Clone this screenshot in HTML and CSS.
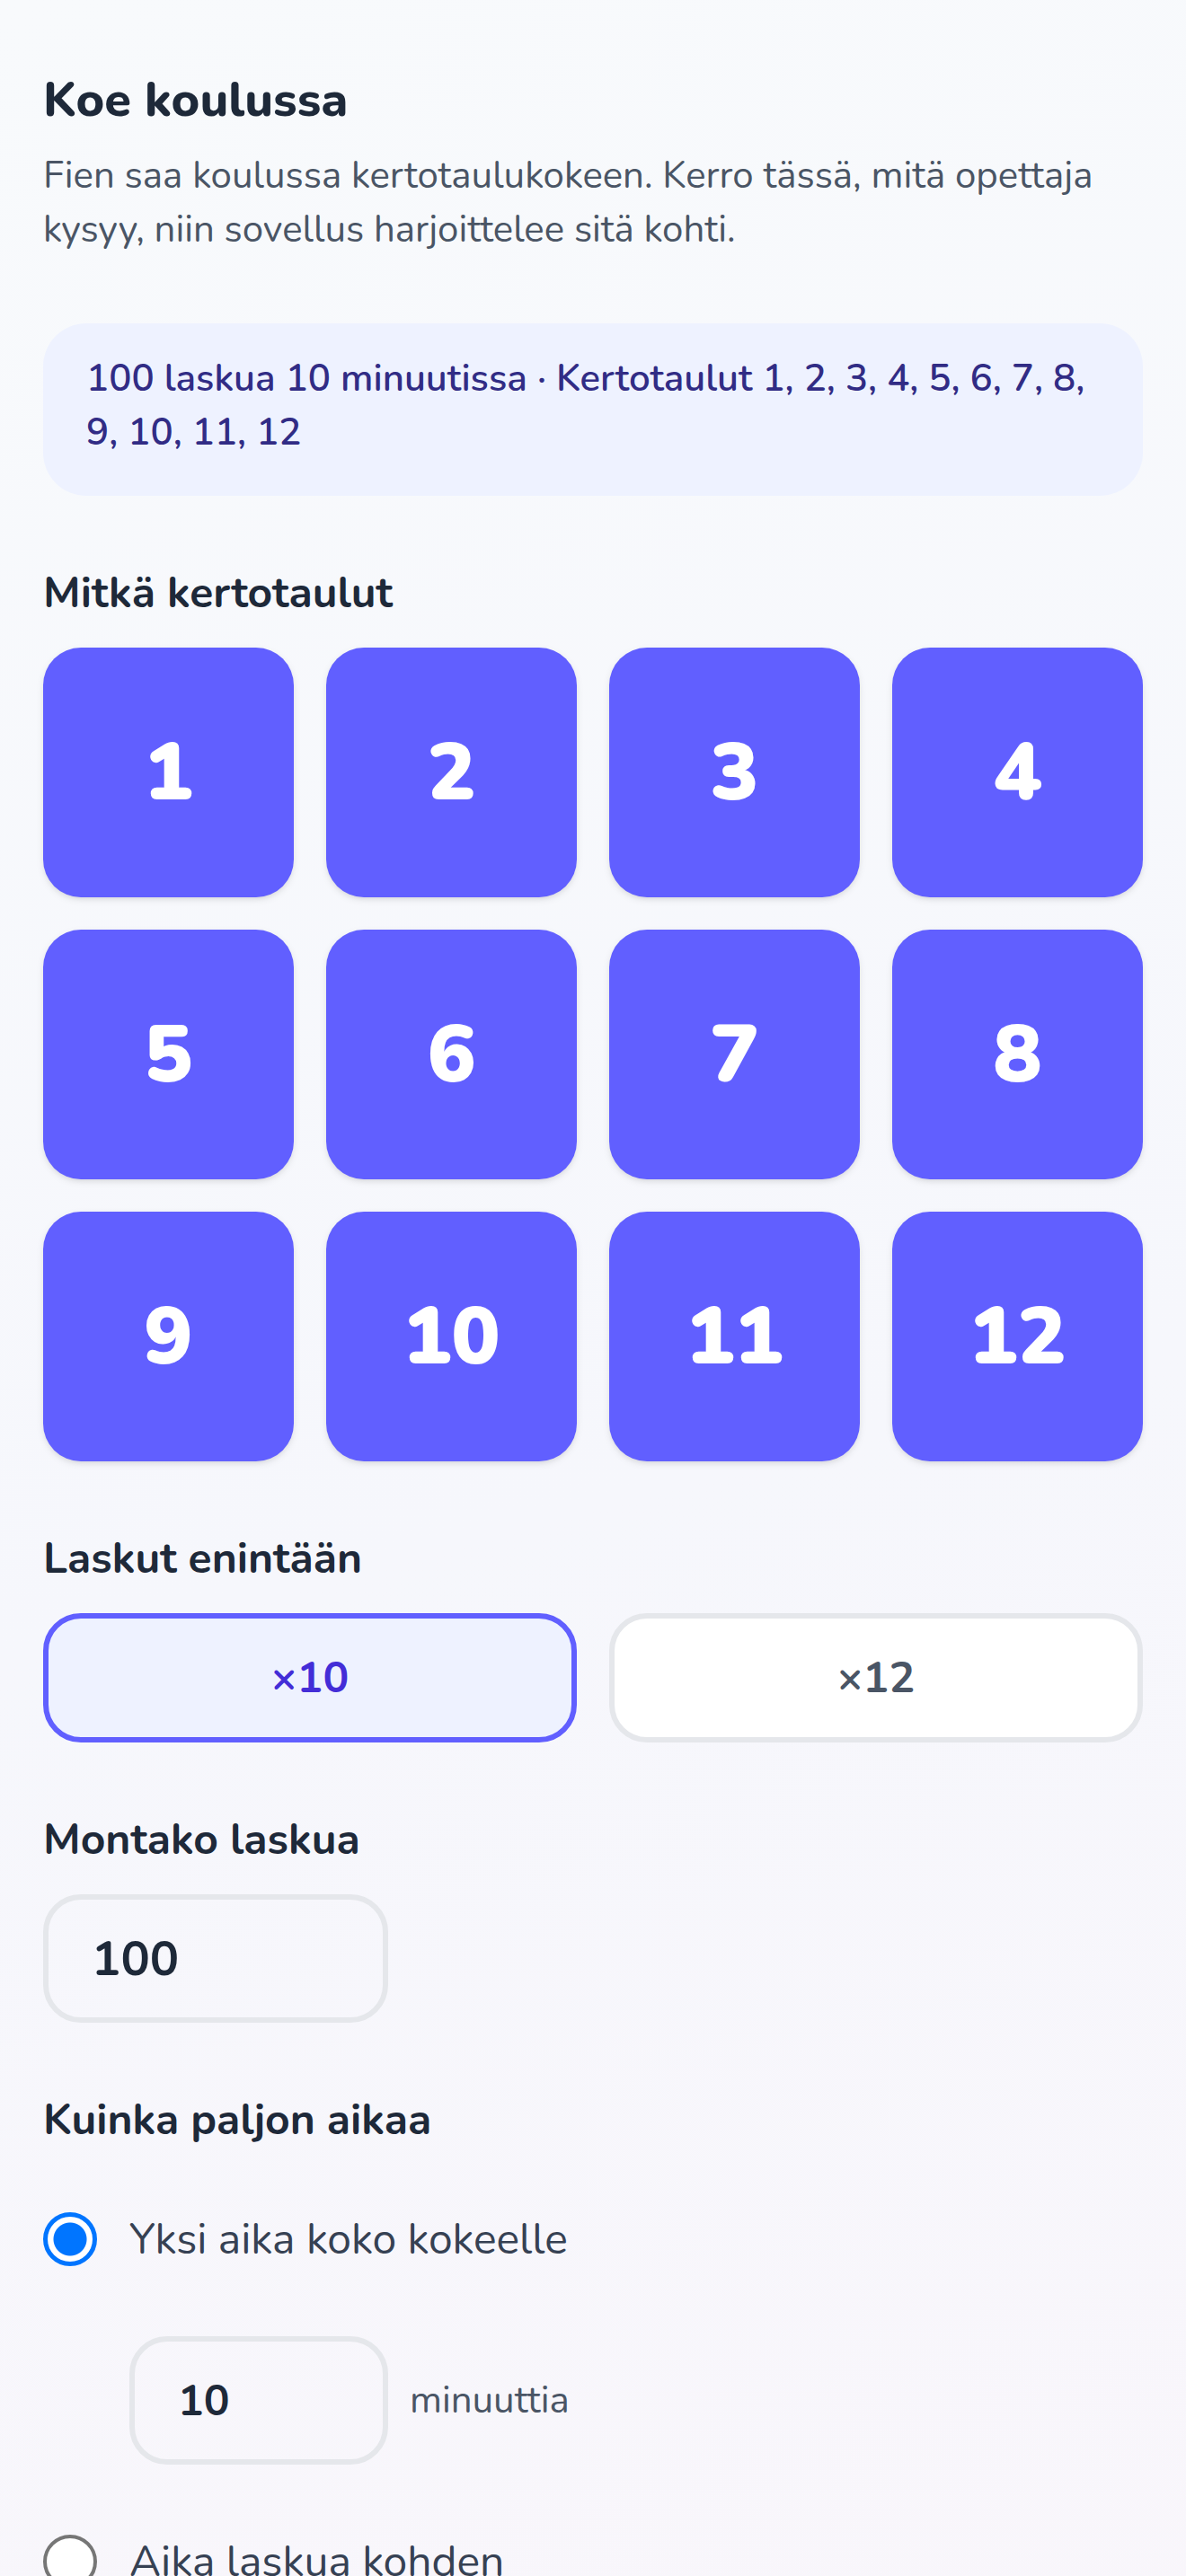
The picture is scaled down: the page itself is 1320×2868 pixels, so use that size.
FILE: index.html
```html
<!DOCTYPE html>
<html lang="fi">
<head>
<meta charset="UTF-8">
<meta name="viewport" content="width=device-width, initial-scale=1.0">
<title>Koe koulussa</title>
<link rel="stylesheet" href="styles.css">
</head>
<body>
<div class="page">
  <h1 class="title">Koe koulussa</h1>
  <p class="intro">Fien saa koulussa kertotaulukokeen. Kerro tässä, mitä opettaja kysyy, niin sovellus harjoittelee sitä kohti.</p>

  <div class="summary">100 laskua 10 minuutissa · Kertotaulut 1, 2, 3, 4, 5, 6, 7, 8, 9, 10, 11, 12</div>

  <section class="field">
    <h3 class="field-label">Mitkä kertotaulut</h3>
    <div class="tables">
      <button class="table-btn">1</button>
      <button class="table-btn">2</button>
      <button class="table-btn">3</button>
      <button class="table-btn">4</button>
      <button class="table-btn">5</button>
      <button class="table-btn">6</button>
      <button class="table-btn">7</button>
      <button class="table-btn">8</button>
      <button class="table-btn">9</button>
      <button class="table-btn">10</button>
      <button class="table-btn">11</button>
      <button class="table-btn">12</button>
    </div>
  </section>

  <section class="field">
    <h3 class="field-label">Laskut enintään</h3>
    <div class="max-choice">
      <button class="choice selected">×10</button>
      <button class="choice">×12</button>
    </div>
  </section>

  <section class="field">
    <h3 class="field-label">Montako laskua</h3>
    <input class="count-input" type="text" value="100">
  </section>

  <section class="field">
    <h3 class="field-label">Kuinka paljon aikaa</h3>
    <div class="time-options">
      <label class="option">
        <input type="radio" name="timeMode" checked>
        <span>Yksi aika koko kokeelle</span>
      </label>
      <div class="minutes-row">
        <input class="minutes-input" type="text" value="10">
        <span class="unit">minuuttia</span>
      </div>
      <label class="option">
        <input type="radio" name="timeMode">
        <span>Aika laskua kohden</span>
      </label>
    </div>
  </section>
</div>
</body>
</html>
```

FILE: styles.css
```css
html {
  background: linear-gradient(165deg, #f8fafc 0%, #f6f7fc 55%, #f9f6fb 100%);
  min-height: 100%;
}
body {
  font-family: "Nunito", Lato, "Noto Sans", sans-serif;
  margin: 0;
  padding: 0;
  color: #1e2939;
}
.page {
  padding: 72px 48px 120px;
}
.title {
  font-size: 54px;
  line-height: 78px;
  font-weight: 800;
  color: #1e2939;
  margin: 0 0 16px;
}
.intro {
  font-size: 42px;
  line-height: 60px;
  color: #4a5565;
  margin: 0 0 74px;
}
.summary {
  background-color: #eef2ff;
  border-radius: 48px;
  padding: 32px 48px 40px;
  font-size: 42px;
  line-height: 60px;
  font-weight: 600;
  color: #312c85;
}
.field {
  margin-top: 75px;
}
.field-label {
  font-size: 48px;
  line-height: 66px;
  font-weight: 700;
  color: #1e2939;
  margin: 0 0 28px;
}
.tables {
  display: grid;
  grid-template-columns: repeat(4, 1fr);
  gap: 36px;
}
.table-btn {
  height: 278px;
  border: none;
  border-radius: 42px;
  background-color: #615fff;
  color: #fff;
  font-family: inherit;
  font-size: 90px;
  font-weight: 900;
  box-shadow: 0 3px 9px rgba(0, 0, 0, 0.08), 0 3px 6px -3px rgba(0, 0, 0, 0.1);
  cursor: pointer;
}
.max-choice {
  display: grid;
  grid-template-columns: 1fr 1fr;
  gap: 36px;
}
.choice {
  height: 144px;
  border: 6px solid #e5e7eb;
  border-radius: 42px;
  background-color: #fff;
  color: #4a5565;
  font-family: inherit;
  font-size: 48px;
  font-weight: 700;
  cursor: pointer;
}
.choice.selected {
  border-color: #615fff;
  background-color: #eef2ff;
  color: #432dd7;
}
.count-input,
.minutes-input {
  box-sizing: border-box;
  height: 143px;
  border: 6px solid #e5e7eb;
  border-radius: 42px;
  background: transparent;
  padding: 0 48px;
  font-family: inherit;
  font-weight: 700;
  color: #1e2939;
  outline: none;
}
.count-input {
  display: block;
  width: 384px;
  font-size: 54px;
}
.minutes-input {
  width: 288px;
  font-size: 48px;
}
.time-options {
  display: flex;
  flex-direction: column;
  gap: 72px;
  padding-top: 36px;
}
.option {
  display: flex;
  align-items: center;
  gap: 36px;
  font-size: 48px;
  line-height: 72px;
  color: #364153;
}
.option input {
  appearance: none;
  margin: 0;
  width: 60px;
  height: 60px;
  flex-shrink: 0;
  box-sizing: border-box;
  border: 4px solid #767676;
  border-radius: 50%;
  background: #fff;
}
.option input:checked {
  border: 5px solid #0075ff;
  background: radial-gradient(circle, #0075ff 0 18px, #fff 19px);
}
.minutes-row {
  display: flex;
  align-items: center;
  gap: 24px;
  padding-left: 96px;
}
.unit {
  font-size: 42px;
  color: #4a5565;
}
```
